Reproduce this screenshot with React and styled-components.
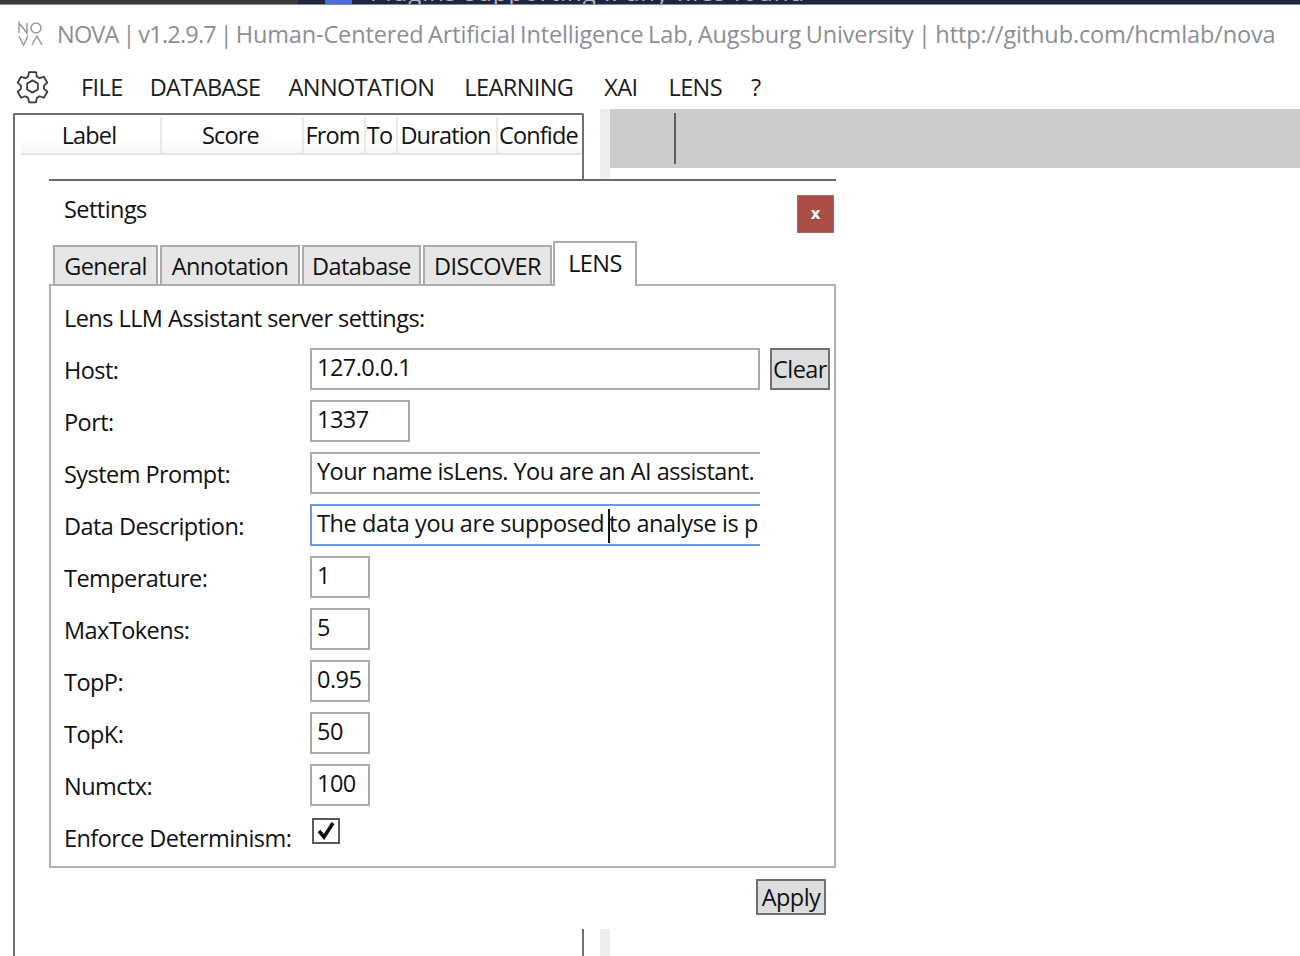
import React from 'react';
import styled, { createGlobalStyle } from 'styled-components';

const FONT = `"Open Sans", "Noto Sans", "Liberation Sans", sans-serif`;

const GlobalStyle = createGlobalStyle`
  html, body {
    margin: 0;
    padding: 0;
    background: #fff;
    overflow: hidden;
  }
  body {
    font-family: ${FONT};
    color: #111;
  }
`;

const Page = styled.div`
  position: relative;
  width: 1300px;
  height: 956px;
  overflow: hidden;
  background: #fff;
`;

const TopStrip = styled.div`
  height: 4px;
  display: flex;
  background: #3a3a3a;
  border-bottom: 1px solid #8a8a8a;
  overflow: hidden;
`;

const StripDark = styled.div`
  flex: 1;
  display: flex;
  background: #1f2440;
  margin-left: 298px;
  padding-left: 27px;
`;

const StripBadge = styled.div`
  width: 27px;
  height: 4px;
  background: #4a6fd8;
`;

const StripText = styled.span`
  margin: -21px 0 0 18px;
  font-size: 24px;
  line-height: 26px;
  letter-spacing: 1px;
  color: #b4b6c0;
  white-space: nowrap;
`;

const TitleBar = styled.div`
  height: 51px;
  box-sizing: border-box;
  display: flex;
  align-items: center;
  padding: 6px 0 0 17px;
  gap: 12px;
`;

const TitleText = styled.span`
  font-size: 23.5px;
  letter-spacing: -0.13px;
  word-spacing: -1.5px;
  color: #8d8d96;
  white-space: nowrap;
`;

const TitleLead = styled.span`
  letter-spacing: -0.8px;
`;

const MenuBar = styled.div`
  height: 53px;
  box-sizing: border-box;
  display: flex;
  align-items: center;
  padding: 8px 0 0 15px;
`;

const MenuItem = styled.span`
  font-size: 23.5px;
  letter-spacing: -0.6px;
  margin-left: ${p => p.$gap}px;
  color: #1c1c1c;
  white-space: nowrap;
`;

const Workspace = styled.div`
  flex: 1;
  display: flex;
  height: 847px;
`;

const LeftPanel = styled.div`
  width: 571px;
  margin: 4px 0 0 13px;
  border: 2px solid #707070;
  border-bottom: none;
  border-radius: 2px 2px 0 0;
  box-sizing: border-box;
  padding: 2px 0 0 6px;
`;

const GridHeader = styled.div`
  display: flex;
  height: 36px;
  padding-right: 1px;
  border-bottom: 2px solid #e3e3e3;
  background: linear-gradient(#ffffff 60%, #f6f7f8);
`;

const HeaderCell = styled.div`
  width: ${p => p.$w}px;
  flex: none;
  display: flex;
  align-items: center;
  justify-content: ${p => (p.$clip ? 'flex-start' : 'center')};
  padding: ${p => (p.$clip ? '0 0 0 1px' : '0 3px 0 0')};
  font-size: 23.5px;
  letter-spacing: -0.85px;
  border-right: ${p => (p.$clip ? 'none' : '2px solid #e8e8e8')};
  box-sizing: border-box;
  overflow: hidden;
  white-space: nowrap;
`;

const Splitter = styled.div`
  width: 10px;
  margin-left: 16px;
  background: #eeeeee;
`;

const RightPanel = styled.div`
  flex: 1;
  height: 59px;
  background: #cccccc;
  display: flex;
  padding: 4px 0 0 64px;
  box-sizing: border-box;
`;

const Divider = styled.div`
  width: 2px;
  height: 51px;
  background: #5c5c5c;
`;

const Dialog = styled.div`
  position: absolute;
  left: 49px;
  top: 179px;
  width: 787px;
  height: 750px;
  box-sizing: border-box;
  background: #fff;
  border-top: 2px solid #6a6a6a;
  display: flex;
  flex-direction: column;
`;

const DialogHead = styled.div`
  height: 60px;
  display: flex;
  justify-content: space-between;
  align-items: flex-start;
  padding: 12px 2px 0 15px;
  box-sizing: border-box;
`;

const DialogTitle = styled.span`
  font-size: 23.5px;
  letter-spacing: -0.55px;
`;

const CloseButton = styled.button`
  width: 37px;
  height: 38px;
  margin-top: 2px;
  border: 1px solid #b5635c;
  background: #a94e47;
  color: #fff;
  font-family: "DejaVu Sans", sans-serif;
  font-weight: 700;
  font-size: 15px;
  padding: 0;
`;

const TabRow = styled.div`
  height: 45px;
  display: flex;
  align-items: flex-end;
  padding-left: 4px;
  gap: 2px;
  position: relative;
  z-index: 1;
  margin-bottom: -2px;
`;

const Tab = styled.div`
  width: ${p => p.$w}px;
  height: 41px;
  box-sizing: border-box;
  display: flex;
  align-items: center;
  justify-content: center;
  font-size: 23.5px;
  letter-spacing: -0.55px;
  border: 2px solid #ababab;
  background: #e6e6e6;
  white-space: nowrap;
`;

const ActiveTab = styled(Tab)`
  height: 45px;
  margin-left: -1px;
  padding-top: 4px;
  align-items: flex-start;
  border-bottom: none;
  background: #fff;
`;

const TabPanel = styled.div`
  height: 584px;
  box-sizing: border-box;
  border: 2px solid #b0b0b0;
  padding: 12px 0 0 13px;
  display: flex;
  flex-direction: column;
`;

const PanelHeading = styled.div`
  font-size: 23.5px;
  letter-spacing: -0.55px;
  height: 45px;
  line-height: 40px;
`;

const FormRow = styled.div`
  height: 52px;
  display: flex;
  align-items: center;
`;

const FieldLabel = styled.span`
  width: 246px;
  flex: none;
  font-size: 23.5px;
  letter-spacing: -0.55px;
  white-space: nowrap;
  position: relative;
  top: 1px;
`;

const Input = styled.div`
  width: ${p => p.$w}px;
  height: 42px;
  box-sizing: border-box;
  border: 2px solid ${p => (p.$focus ? '#6f9bdc' : '#ababab')};
  border-right: ${p => (p.$open ? 'none' : undefined)};
  padding: 0 5px;
  font-size: 23.5px;
  letter-spacing: ${p => (p.$focus ? '-0.4px' : '-0.55px')};
  line-height: 34px;
  white-space: nowrap;
  overflow: hidden;
  background: #fff;
`;

const Caret = styled.span`
  display: inline-block;
  width: 2px;
  height: 34px;
  background: #111;
  vertical-align: middle;
  margin: 0 -1px 0 -2px;
`;

const SquareButton = styled.button`
  font-family: ${FONT};
  font-size: 23.5px;
  letter-spacing: -0.55px;
  color: #111;
  background: #dddddd;
  border: 2px solid #707070;
  padding: 0;
  box-sizing: border-box;
  width: ${p => p.$w}px;
  height: ${p => p.$h}px;
  overflow: hidden;
`;

const ClearButton = styled(SquareButton)`
  margin-left: 10px;
`;

const Check = styled.div`
  width: 28px;
  height: 26px;
  box-sizing: border-box;
  border: 2px solid #5a5a5a;
  display: flex;
  align-items: center;
  justify-content: center;
  margin: -12px 0 0 2px;
  background: #fff;
`;

const Footer = styled.div`
  display: flex;
  justify-content: flex-end;
  padding: 11px 10px 0 0;
`;

const rows = [
  { label: 'Port:', value: '1337', w: 100 },
  { label: 'System Prompt:', value: 'Your name isLens. You are an AI assistant.', w: 450, open: true },
  { label: 'Data Description:', w: 450, open: true, focus: true },
  { label: 'Temperature:', value: '1', w: 60 },
  { label: 'MaxTokens:', value: '5', w: 60 },
  { label: 'TopP:', value: '0.95', w: 60 },
  { label: 'TopK:', value: '50', w: 60 },
  { label: 'Numctx:', value: '100', w: 60 },
];

const columns = [
  { name: 'Label', w: 141 },
  { name: 'Score', w: 142 },
  { name: 'From', w: 62 },
  { name: 'To', w: 32 },
  { name: 'Duration', w: 100 },
  { name: 'Confide', w: 84, clip: true },
];

const tabs = [
  ['General', 105],
  ['Annotation', 140],
  ['Database', 119],
  ['DISCOVER', 129],
];

const menu = [
  ['FILE', 31],
  ['DATABASE', 27],
  ['ANNOTATION', 28],
  ['LEARNING', 30],
  ['XAI', 31],
  ['LENS', 31],
  ['?', 29],
];

const NovaLogo = () => (
  <svg width="28" height="28" viewBox="0 0 28 28" fill="none" stroke="#9a9a9a" strokeWidth="1.5">
    <path d="M2 13V3l8 10V3" />
    <circle cx="19" cy="8" r="5" />
    <path d="M2 16l4.5 9L11 16" />
    <path d="M15 25l5-9 5 9" />
  </svg>
);

const GearIcon = () => (
  <svg width="35" height="35" viewBox="0 0 24 24" fill="none" stroke="#3a3a3a" strokeWidth="1.2" strokeLinejoin="round">
    <path d="M9.6 2.2h4.8l.6 3 1.9 1.1 2.9-1 2.4 4.1-2.3 2v2.2l2.3 2-2.4 4.1-2.9-1-1.9 1.1-.6 3H9.6l-.6-3-1.9-1.1-2.9 1-2.4-4.1 2.3-2v-2.2l-2.3-2 2.4-4.1 2.9 1L9 5.2z" />
    <path d="M12 7.8l3.7 2.1v4.2L12 16.2l-3.7-2.1V9.9z" />
  </svg>
);

const App = () => (
  <Page>
    <GlobalStyle />
    <TopStrip>
      <StripDark>
        <StripBadge />
        <StripText>Plugins supporting .. any files found</StripText>
      </StripDark>
    </TopStrip>
    <TitleBar>
      <NovaLogo />
      <TitleText>
        <TitleLead>NOVA | v1.2.9.7 | </TitleLead>
        Human-Centered Artificial Intelligence Lab, Augsburg University | http://github.com/hcmlab/nova
      </TitleText>
    </TitleBar>
    <MenuBar>
      <GearIcon />
      {menu.map(([name, gap]) => (
        <MenuItem key={name} $gap={gap}>{name}</MenuItem>
      ))}
    </MenuBar>
    <Workspace>
      <LeftPanel>
        <GridHeader>
          {columns.map(c => (
            <HeaderCell key={c.name} $w={c.w} $clip={c.clip}>{c.name}</HeaderCell>
          ))}
        </GridHeader>
      </LeftPanel>
      <Splitter />
      <RightPanel>
        <Divider />
      </RightPanel>
    </Workspace>

    <Dialog>
      <DialogHead>
        <DialogTitle>Settings</DialogTitle>
        <CloseButton>x</CloseButton>
      </DialogHead>
      <TabRow>
        {tabs.map(([t, w]) => <Tab key={t} $w={w}>{t}</Tab>)}
        <ActiveTab $w={84}>LENS</ActiveTab>
      </TabRow>
      <TabPanel>
        <PanelHeading>Lens LLM Assistant server settings:</PanelHeading>
        <FormRow>
          <FieldLabel>Host:</FieldLabel>
          <Input $w={450}>127.0.0.1</Input>
          <ClearButton $w={60} $h={42}>Clear</ClearButton>
        </FormRow>
        {rows.map(r => (
          <FormRow key={r.label}>
            <FieldLabel>{r.label}</FieldLabel>
            <Input $w={r.w} $open={r.open} $focus={r.focus}>
              {r.focus ? <>The data you are supposed <Caret />to analyse is p</> : r.value}
            </Input>
          </FormRow>
        ))}
        <FormRow>
          <FieldLabel>Enforce Determinism:</FieldLabel>
          <Check>
            <svg width="20" height="20" viewBox="0 0 20 20" fill="none" stroke="#111" strokeWidth="3.6">
              <path d="M3 10l5 6L17 2" />
            </svg>
          </Check>
        </FormRow>
      </TabPanel>
      <Footer>
        <SquareButton $w={70} $h={36}>Apply</SquareButton>
      </Footer>
    </Dialog>
  </Page>
);

export default App;
